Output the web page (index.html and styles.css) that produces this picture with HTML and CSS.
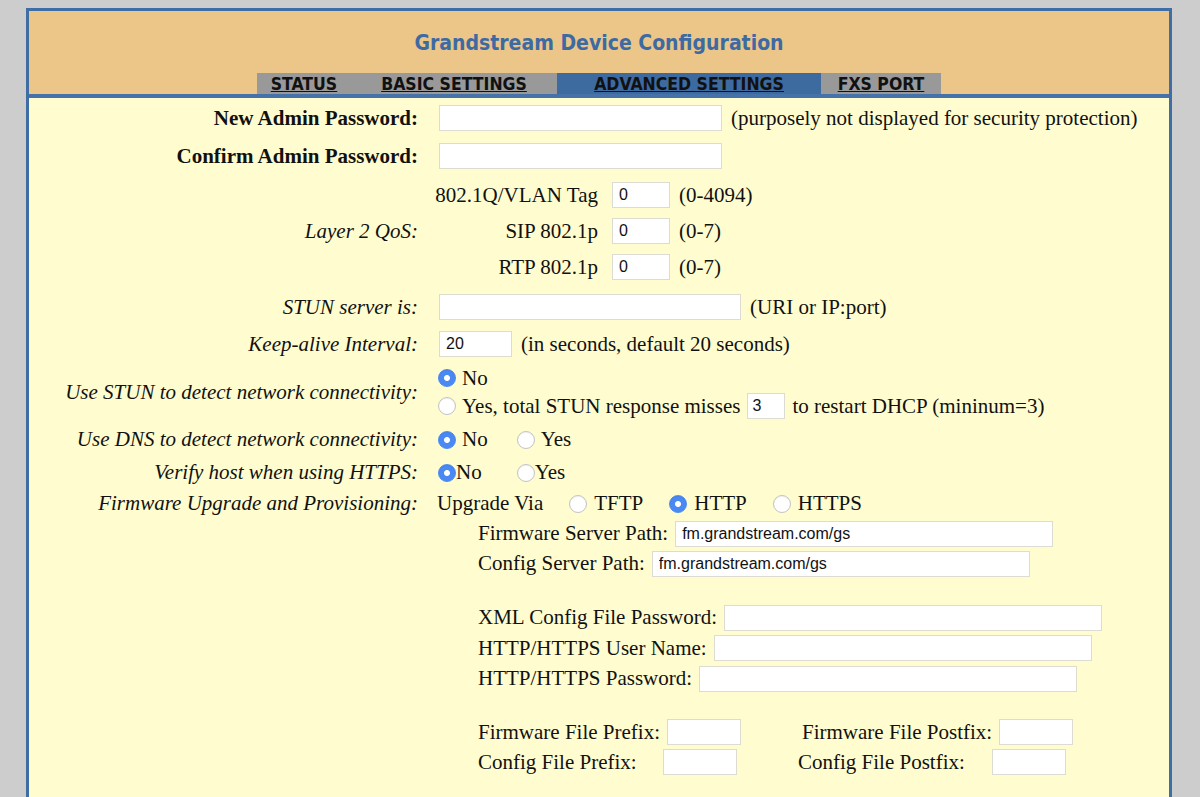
FILE: index.html
```html
<!DOCTYPE html>
<html lang="en">
<head>
  <meta charset="UTF-8" />
  <title>Grandstream Device Configuration</title>
  <link rel="stylesheet" href="styles.css">
</head>
<body>

  <div class="frame">
    <div class="head">
      <h1>Grandstream Device Configuration</h1>
      <div class="tabs">
        <div class="tab w-status"><a href="#">STATUS</a></div>
        <div class="tab w-basic"><a href="#">BASIC SETTINGS</a></div>
        <div class="tab w-adv on"><a href="#">ADVANCED SETTINGS</a></div>
        <div class="tab w-fxs"><a href="#">FXS PORT</a></div>
      </div>
    </div>

    <form class="form">
      <div class="row r40">
        <div class="label strong">New Admin Password:</div>
        <div class="value"><input type="password" class="in pw"><span class="note">(purposely not displayed for security protection)</span></div>
      </div>
      <div class="row r36">
        <div class="label strong">Confirm Admin Password:</div>
        <div class="value"><input type="password" class="in pw"></div>
      </div>

      <div class="row qos">
        <div class="label">Layer 2 QoS:</div>
        <div class="subgrid">
          <div class="sublabel">802.1Q/VLAN Tag</div>
          <div class="value"><input class="in tiny" value="0"><span class="note">(0-4094)</span></div>
          <div class="sublabel">SIP 802.1p</div>
          <div class="value"><input class="in tiny" value="0"><span class="note">(0-7)</span></div>
          <div class="sublabel">RTP 802.1p</div>
          <div class="value"><input class="in tiny" value="0"><span class="note">(0-7)</span></div>
        </div>
      </div>

      <div class="row r38">
        <div class="label">STUN server is:</div>
        <div class="value"><input class="in stun"><span class="note">(URI or IP:port)</span></div>
      </div>
      <div class="row r36">
        <div class="label">Keep-alive Interval:</div>
        <div class="value"><input class="in keep" value="20"><span class="note">(in seconds, default 20 seconds)</span></div>
      </div>

      <div class="row two">
        <div class="label">Use STUN to detect network connectivity:</div>
        <div class="stack">
          <div class="value"><input type="radio" name="stun" class="rb" checked><span class="opt">No</span></div>
          <div class="value">
            <input type="radio" name="stun" class="rb"><span class="opt">Yes, total STUN response misses</span>
            <input class="in misses" value="3"><span class="note">to restart DHCP (mininum=3)</span>
          </div>
        </div>
      </div>

      <div class="row r35">
        <div class="label">Use DNS to detect network connectivity:</div>
        <div class="value">
          <input type="radio" name="dns" class="rb" checked><span class="opt w-no">No</span>
          <input type="radio" name="dns" class="rb"><span class="opt">Yes</span>
        </div>
      </div>
      <div class="row r31">
        <div class="label">Verify host when using HTTPS:</div>
        <div class="value">
          <input type="radio" name="verify" class="rb" checked><span class="opt tight w-no2">No</span>
          <input type="radio" name="verify" class="rb"><span class="opt tight">Yes</span>
        </div>
      </div>
      <div class="row r31">
        <div class="label">Firmware Upgrade and Provisioning:</div>
        <div class="value">
          <span>Upgrade Via</span>
          <input type="radio" name="via" class="rb spaced"><span class="opt">TFTP</span>
          <input type="radio" name="via" class="rb spaced" checked><span class="opt">HTTP</span>
          <input type="radio" name="via" class="rb spaced"><span class="opt">HTTPS</span>
        </div>
      </div>

      <div class="line l29">Firmware Server Path:<input class="in path" value="fm.grandstream.com/gs"></div>
      <div class="line l31">Config Server Path:<input class="in path" value="fm.grandstream.com/gs"></div>
      <div class="gap"></div>
      <div class="line l31">XML Config File Password:<input type="password" class="in path"></div>
      <div class="line l30">HTTP/HTTPS User Name:<input class="in path"></div>
      <div class="line l31">HTTP/HTTPS Password:<input type="password" class="in path"></div>
      <div class="gap"></div>
      <div class="line l30">
        <span class="fix-a">Firmware File Prefix:</span><input class="in fix">
        <span class="post fix-c">Firmware File Postfix:</span><input class="in fix">
      </div>
      <div class="line l30">
        <span class="fix-b">Config File Prefix:</span><input class="in fix">
        <span class="post fix-d">Config File Postfix:</span><input class="in fix">
      </div>
    </form>
  </div>

</body>
</html>
```

FILE: styles.css
```css
* { box-sizing: border-box; }
body {
  margin: 0; background: #cdcdcd; color: #111;
  font-family: "Liberation Serif", "Times New Roman", serif; font-size: 21px;
}
.frame {
  margin: 8px 28px 0 26px; min-height: 789px;
  border: 3px solid #3f6ea5; border-bottom: 0;
  background: #fffdd0;
}

/* header + tabs */
.head {
  background: #ecc589; border-bottom: 4px solid #4573a9;
  padding-top: 20px; text-align: center;
}
.head h1 {
  margin: 0 0 18px;
  font: bold 21px/24px "DejaVu Sans Condensed", "DejaVu Sans", sans-serif;
  color: #3e6aa2;
}
.tabs { display: flex; justify-content: center; }
.tab {
  height: 21px; background: #999;
  font: bold 17.5px/23px "DejaVu Sans Condensed", "DejaVu Sans", sans-serif;
  text-align: center;
}
.tab a { color: #111; }
.tab.on { background: #3d6a9f; }
.w-status { width: 94px; }
.w-basic { width: 206px; }
.w-adv { width: 264px; }
.w-fxs { width: 120px; }

/* form rows */
.form { margin: 0; }
.row {
  display: grid; grid-template-columns: 389px 1fr; column-gap: 19px;
  align-items: center;
}
.r40 { height: 40px; }
.r38 { height: 38px; }
.r36 { height: 36px; }
.r35 { height: 35px; }
.r31 { height: 31px; }
.label { text-align: right; font-style: italic; white-space: nowrap; }
.label.strong { font-style: normal; font-weight: bold; }
.value { display: flex; align-items: center; white-space: nowrap; }
.note { margin-left: 9px; }

.qos { padding: 3px 0; }
.subgrid {
  display: grid; grid-template-columns: 168px 1fr; column-gap: 14px;
  grid-auto-rows: 36px; align-items: center;
  margin-left: -7px;
}
.sublabel { text-align: right; white-space: nowrap; }

.two { padding: 2px 0; }
.stack > .value { height: 28px; }

.in {
  height: 26px; margin: 0 0 0 2px; padding: 0 6px;
  border: 1px solid #dcdcd2; background: #fff;
  font: 16px "Liberation Sans", Arial, sans-serif; color: #111;
}
.pw { width: 283px; }
.tiny { width: 58px; margin-left: 0; }
.stun { width: 302px; }
.keep { width: 73px; }
.misses { width: 38px; margin-left: 7px; padding: 0 4px; }
.misses + .note { margin-left: 7px; }
.path { width: 378px; margin-left: 7px; }
.fix { width: 74px; margin-left: 0; }

/* radios */
.rb {
  appearance: none; -webkit-appearance: none;
  width: 18px; height: 18px; margin: 0 0 0 1px; flex: none;
  border: 1px solid #c3c3c3; border-radius: 50%;
  background: #fff; box-shadow: inset 0 1px 1px rgba(0,0,0,0.06);
}
.rb:checked {
  border-color: #4a89f3;
  background: radial-gradient(circle, #fff 0 2.5px, #4a89f3 3.5px);
}
.opt { margin-left: 6px; }
.opt.tight { margin-left: 0; }
.w-no { margin-right: 28px; }
.w-no2 { margin-right: 34px; }
.rb.spaced { margin-left: 26px; }
.rb.spaced + .opt { margin-left: 7px; }

/* lower block */
.line {
  display: flex; align-items: center; white-space: nowrap;
  padding-left: 449px;
}
.l29 { height: 29px; }
.l30 { height: 30px; }
.l31 { height: 31px; }
.gap { height: 23px; }
.fix-a { width: 189px; }
.fix-b { width: 185px; }
.fix-c { width: 197px; }
.fix-d { width: 194px; }
.post { margin-left: 61px; }
```
